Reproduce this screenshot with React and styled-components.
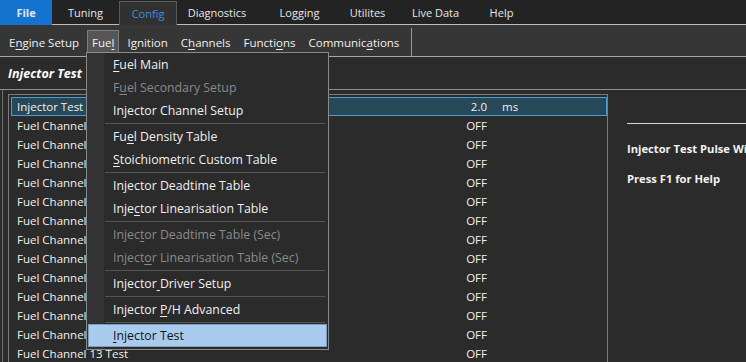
import React from 'react';
import styled, { createGlobalStyle } from 'styled-components';

const GlobalStyle = createGlobalStyle`
  html, body { margin: 0; padding: 0; background: #2b2b2b; }
  body { font-family: "Open Sans", "Noto Sans", sans-serif; }
  * { box-sizing: border-box; }
`;

const FONT = '"Open Sans", "Noto Sans", sans-serif';

const Screen = styled.div`
  position: relative;
  width: 746px;
  height: 362px;
  overflow: hidden;
  background: #2b2b2b;
  color: #f0f0f0;
  font-family: ${FONT};
  font-size: 11.5px;
  display: flex;
  flex-direction: column;
`;

const MenuBar = styled.div`
  height: 25px;
  display: flex;
  flex-shrink: 0;
  background: #232323;
  font-size: 11px;
`;

const MenuTab = styled.div`
  width: ${(p) => p.$w}px;
  height: 25px;
  display: flex;
  align-items: center;
  justify-content: center;
  color: ${(p) => (p.$active ? '#3a8fe0' : '#e6e6e6')};
  font-weight: ${(p) => (p.$primary ? 700 : 400)};
  background: ${(p) => (p.$primary ? '#1573d0' : 'transparent')};
  border-bottom: 1px solid ${(p) => (p.$primary ? '#1573d0' : '#bdbdbd')};
  ${(p) =>
    p.$active &&
    `border: 1px solid #5a5a5a; border-bottom: none; margin-top: 1px; height: 24px; background: #313131;`}
`;

const Filler = styled.div`
  flex: 1;
  border-bottom: 1px solid #bdbdbd;
`;

const Ribbon = styled.div`
  height: 32px;
  flex-shrink: 0;
  display: flex;
  align-items: flex-end;
  gap: 3px;
  padding-left: 4px;
  background: #363636;
  border-bottom: 1px solid #a8a8a8;
`;

const RibbonItem = styled.div`
  height: 23px;
  padding: 0 4px;
  margin-bottom: 3px;
  display: flex;
  align-items: center;
  color: #f0f0f0;
  white-space: nowrap;
  background: ${(p) => (p.$open ? '#565656' : 'transparent')};
  border: 1px solid ${(p) => (p.$open ? '#7c7c7c' : 'transparent')};
  border-bottom: none;
`;

const RibbonSep = styled.div`
  width: 1px;
  height: 28px;
  margin-left: 4px;
  background: #9a9a9a;
`;

const Label = styled.span`
  white-space: pre;
`;

const Key = styled.span`
  text-decoration: underline;
  text-underline-offset: 2px;
`;

const TitleBar = styled.div`
  height: 33px;
  flex-shrink: 0;
  display: flex;
  align-items: center;
  padding-left: 8px;
  border-bottom: 1px solid #8e8e8e;
  font-size: 12.5px;
  font-weight: 700;
  font-style: italic;
  color: #ffffff;
`;

const Body = styled.div`
  flex: 1;
  display: flex;
  min-height: 0;
`;

const Frame = styled.div`
  margin-left: 2px;
  border-left: 1px solid #6e6e6e;
  padding: 4px 0 0 5px;
`;

const ListBox = styled.div`
  width: 600px;
  height: 100%;
  border: 1px solid #7c7c7c;
  border-bottom: none;
  padding: 2px 0 0 2px;
`;

const Row = styled.div`
  height: 19px;
  display: grid;
  grid-template-columns: 410px 60px 1fr;
  align-items: center;
  padding-left: 5px;
  color: #f4f1e8;
  white-space: nowrap;
  background: ${(p) => (p.$selected ? '#264858' : 'transparent')};
  border: 1px solid ${(p) => (p.$selected ? '#4a9bcf' : 'transparent')};
`;

const Value = styled.span`
  text-align: right;
`;

const Unit = styled.span`
  padding-left: 15px;
`;

const HelpPanel = styled.div`
  flex: 1;
  padding: 33px 0 0 19px;
  overflow: hidden;
  white-space: nowrap;
  font-size: 11.2px;
`;

const HelpRule = styled.div`
  height: 1px;
  background: #d8d8d8;
  margin-bottom: 16px;
`;

const HelpText = styled.div`
  font-weight: 700;
  color: #f2f2f2;
  height: 30px;
  line-height: 18px;
`;

const Dropdown = styled.div`
  position: absolute;
  left: 86px;
  top: 52px;
  width: 243px;
  height: 298px;
  border: 1px solid #8a8a8a;
  padding: 0 1px 1px 0;
  background: linear-gradient(to right, #333333 0 17px, #2b2b2b 17px);
  display: flex;
  flex-direction: column;
  font-size: 12.3px;
`;

const DropItem = styled.div`
  height: 23px;
  display: flex;
  align-items: center;
  padding-left: ${(p) => (p.$hot ? '24px' : '25px')};
  white-space: nowrap;
  color: ${(p) => (p.$disabled ? '#8a8a8a' : p.$hot ? '#141414' : '#f0f0f0')};
  background: ${(p) => (p.$hot ? '#a9cbee' : 'transparent')};
  border: 1px solid ${(p) => (p.$hot ? '#7d9cbc' : 'transparent')};
  margin-left: ${(p) => (p.$hot ? '1px' : '0')};
`;

const DropSep = styled.div`
  height: 3px;
  margin: 0 2px 0 18px;
  display: flex;
  align-items: center;
  &::after {
    content: '';
    flex: 1;
    height: 1px;
    background: #555555;
  }
`;

const tabs = [
  { label: 'File', w: 52, primary: true },
  { label: 'Tuning', w: 67 },
  { label: 'Config', w: 58, active: true },
  { label: 'Diagnostics', w: 80 },
  { label: 'Logging', w: 85 },
  { label: 'Utilites', w: 51 },
  { label: 'Live Data', w: 85 },
  { label: 'Help', w: 47 },
];

const K = (pre, key, post) => (
  <Label>
    {pre}
    <Key>{key}</Key>
    {post}
  </Label>
);

const ribbon = [
  { node: K('E', 'n', 'gine Setup') },
  { node: K('Fue', 'l', ''), open: true },
  { node: K('I', 'g', 'nition') },
  { node: K('C', 'h', 'annels') },
  { node: K('Functi', 'o', 'ns') },
  { node: K('Communic', 'a', 'tions') },
];

const menu = [
  { node: K('', 'F', 'uel Main') },
  { node: K('F', 'u', 'el Secondary Setup'), disabled: true },
  { node: K('In', 'j', 'ector Channel Setup') },
  { sep: true },
  { node: K('Fu', 'e', 'l Density Table') },
  { node: K('', 'S', 'toichiometric Custom Table') },
  { sep: true },
  { node: K('In', 'j', 'ector Deadtime Table') },
  { node: K('Inje', 'c', 'tor Linearisation Table') },
  { sep: true },
  { node: K('Injec', 't', 'or Deadtime Table (Sec)'), disabled: true },
  { node: K('Inject', 'o', 'r Linearisation Table (Sec)'), disabled: true },
  { sep: true },
  { node: K('Injector', ' ', 'Driver Setup') },
  { sep: true },
  { node: K('Injector ', 'P', '/H Advanced') },
  { sep: true },
  { node: K('', 'I', 'njector Test'), hot: true },
];

const rows = [
  { name: 'Injector Test', value: '2.0', unit: 'ms', selected: true },
  ...Array.from({ length: 13 }, (_, i) => ({
    name: `Fuel Channel ${i + 1} Test`,
    value: 'OFF',
    unit: '',
  })),
];

export default function App() {
  return (
    <Screen>
      <GlobalStyle />
      <MenuBar>
        {tabs.map((t) => (
          <MenuTab key={t.label} $w={t.w} $primary={t.primary} $active={t.active}>
            {t.label}
          </MenuTab>
        ))}
        <Filler />
      </MenuBar>
      <Ribbon>
        {ribbon.map((r, i) => (
          <RibbonItem key={i} $open={r.open}>
            {r.node}
          </RibbonItem>
        ))}
        <RibbonSep />
      </Ribbon>
      <TitleBar>Injector Test</TitleBar>
      <Body>
        <Frame>
          <ListBox>
            {rows.map((r) => (
              <Row key={r.name} $selected={r.selected}>
                <span>{r.name}</span>
                <Value>{r.value}</Value>
                <Unit>{r.unit}</Unit>
              </Row>
            ))}
          </ListBox>
        </Frame>
        <HelpPanel>
          <HelpRule />
          <HelpText>Injector Test Pulse Width</HelpText>
          <HelpText>Press F1 for Help</HelpText>
        </HelpPanel>
      </Body>
      <Dropdown>
        {menu.map((m, i) =>
          m.sep ? (
            <DropSep key={i} />
          ) : (
            <DropItem key={i} $disabled={m.disabled} $hot={m.hot}>
              {m.node}
            </DropItem>
          )
        )}
      </Dropdown>
    </Screen>
  );
}
